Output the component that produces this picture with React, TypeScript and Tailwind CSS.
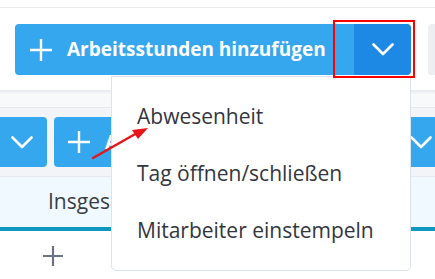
const menuItems = ["Abwesenheit", "Tag öffnen/schließen", "Mitarbeiter einstempeln"];

function PlusIcon({ size, className }: { size: number; className?: string }) {
  return (
    <svg width={size} height={size} viewBox="0 0 20 20" className={`shrink-0 ${className ?? ""}`}>
      <path d="M10 0v20M0 10h20" stroke="currentColor" strokeWidth="2.2" fill="none" />
    </svg>
  );
}

function Chevron({ className }: { className?: string }) {
  return (
    <svg width="22" height="13" viewBox="0 0 22 13" className={`shrink-0 ${className ?? ""}`}>
      <polyline points="1.5,1.5 11,11 20.5,1.5" stroke="currentColor" strokeWidth="2.6" fill="none" strokeLinecap="round" strokeLinejoin="round" />
    </svg>
  );
}

export default function App() {
  return (
    <div
      className="relative w-[435px] h-[279px] overflow-hidden bg-white"
      style={{ fontFamily: "'Open Sans', sans-serif" }}
    >
      {/* top toolbar */}
      <div className="h-[8px] bg-white border-b border-[#e8eaee]" />
      <div className="flex h-[82px] gap-[17px] pl-[15px] pt-[16px] bg-white">
        <div className="flex h-[51px] w-[396px] shrink-0 rounded-[4px] overflow-hidden">
          <div className="flex flex-1 items-center gap-[15px] pl-[15px] bg-[#35a7ee] text-white">
            <PlusIcon size={22} />
            <span className="text-[19px] font-bold leading-none whitespace-nowrap">Arbeitsstunden hinzufügen</span>
          </div>
          <div className="flex w-[57px] items-center justify-center bg-[#1e88e5] text-white">
            <Chevron />
          </div>
        </div>
        <div className="h-[51px] w-[30px] shrink-0 rounded-[4px] bg-[#eceef2]" />
      </div>
      <div className="h-[4px] bg-gradient-to-b from-[#e6e8ec] to-[#f7f8fa]" />
      <div className="h-[14px] bg-[#f8f9fb] border-b border-[#e6e8ee]" />

      {/* second toolbar */}
      <div className="flex h-[68px] gap-[7px] py-[9px] bg-[#f3f4f7]">
        <div className="flex w-[47px] shrink-0 items-center justify-center rounded-r-[4px] bg-[#35a7ee] text-white">
          <Chevron className="-ml-[4px]" />
        </div>
        <div className="flex w-[200px] shrink-0 items-center pl-[14px] rounded-[4px] bg-[#35a7ee] text-white overflow-hidden">
          <PlusIcon size={22} />
          <span className="ml-[15px] text-[19px] font-bold whitespace-nowrap">Abwesenheit</span>
        </div>
        <div className="flex-1" />
        <div className="flex w-[36px] shrink-0 items-center justify-end pr-[3px] rounded-l-[4px] bg-[#35a7ee] text-white">
          <Chevron />
        </div>
      </div>

      {/* table header */}
      <div className="flex h-[55px] items-center pl-[48px] bg-[#f0f9ff] border-t border-[#e6e8ee] border-b-[4px] border-b-[#0f98c2]">
        <span className="text-[21px] text-[#3a3d44]">Insgesamt</span>
      </div>
      <div className="flex h-[49px] items-center pl-[43px] text-[#6b7280]">
        <PlusIcon size={20} />
      </div>

      {/* dropdown menu */}
      <div className="absolute left-[111px] top-[76px] w-[300px] h-[195px] bg-white border border-[#dde2ec] rounded-b-[5px] pt-[24px]">
        {menuItems.map((item) => (
          <div key={item} className="h-[57px] pl-[25px] text-[21px] text-[#333640] leading-[30px]">
            {item}
          </div>
        ))}
      </div>

      {/* annotation box */}
      <div className="absolute left-[333px] top-[20px] w-[82px] h-[58px] border-[2px] border-[#ff0000]" />

      {/* annotation arrow */}
      <svg className="absolute left-0 top-0" width="435" height="279">
        <line x1="93" y1="158" x2="137" y2="133" stroke="#e8141a" strokeWidth="2.5" strokeLinecap="round" />
        <polygon points="148,128 132,130 138,139" fill="#e8141a" />
      </svg>
    </div>
  );
}
